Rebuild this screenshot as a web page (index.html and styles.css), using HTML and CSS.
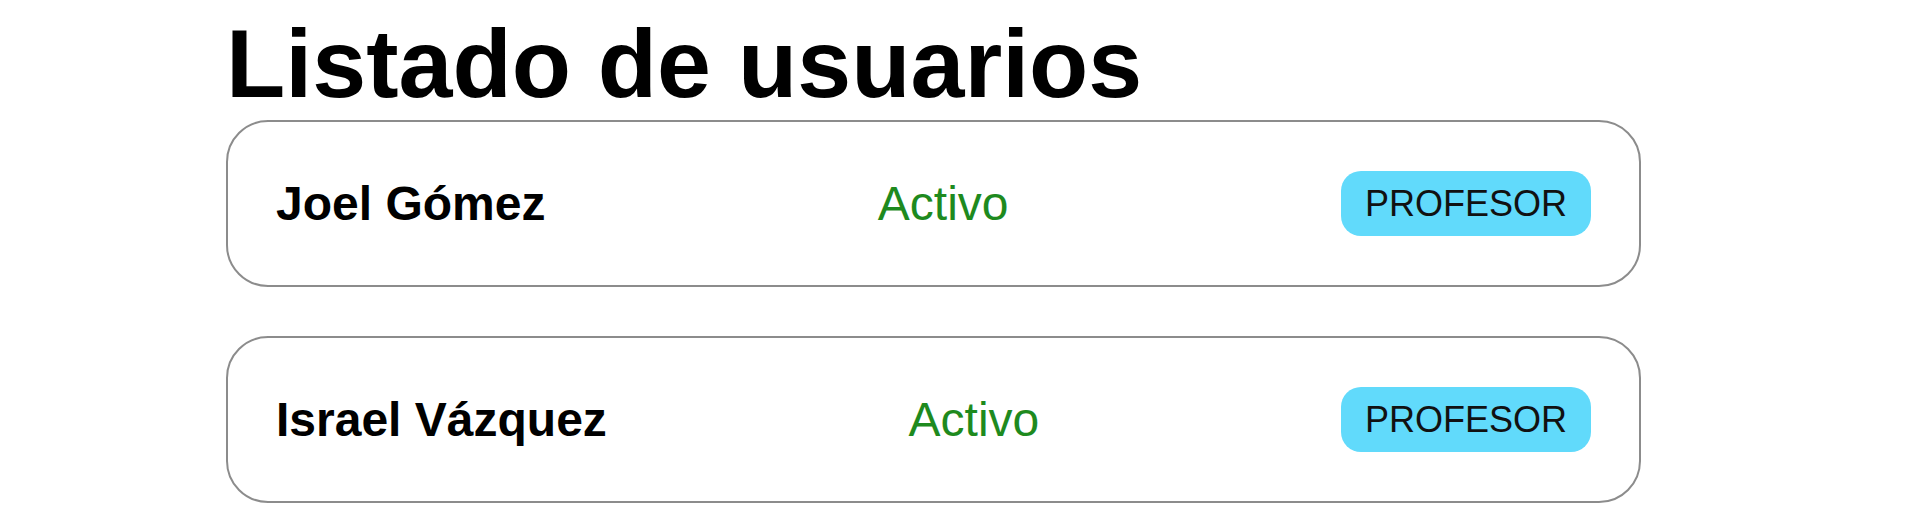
FILE: index.html
```html
<!DOCTYPE html>
<html lang="es">
<head>
<meta charset="utf-8">
<title>Listado de usuarios</title>
<link rel="stylesheet" href="styles.css">
</head>
<body>
<main class="page">
  <h1 class="title">Listado de usuarios</h1>
  <ul class="user-list">
    <li class="user-card">
      <span class="user-name">Joel Gómez</span>
      <span class="user-status">Activo</span>
      <span class="user-role">PROFESOR</span>
    </li>
    <li class="user-card">
      <span class="user-name">Israel Vázquez</span>
      <span class="user-status">Activo</span>
      <span class="user-role">PROFESOR</span>
    </li>
  </ul>
</main>
</body>
</html>
```

FILE: styles.css
```css
html, body {
  margin: 0;
  padding: 0;
  background: #ffffff;
}

body {
  font-family: "Liberation Sans", Arial, sans-serif;
  color: #000000;
}

.page {
  width: 1415px;
  margin-left: 226px;
}

.title {
  margin: 16px 0 8px;
  font-size: 97px;
  line-height: 96px;
  font-weight: 700;
}

.user-list {
  list-style: none;
  margin: 0;
  padding: 0;
  display: flex;
  flex-direction: column;
  gap: 49px;
}

.user-card {
  display: flex;
  align-items: center;
  justify-content: space-between;
  padding: 49px 48px;
  border: 2px solid #8c8c8c;
  border-radius: 42px;
}

.user-name {
  font-size: 48px;
  font-weight: 700;
}

.user-status {
  font-size: 48px;
  color: #1e8a1e;
}

.user-role {
  font-size: 36px;
  line-height: 41px;
  padding: 12px 24px;
  background: #61dafb;
  border-radius: 20px;
  color: #111111;
}
```
